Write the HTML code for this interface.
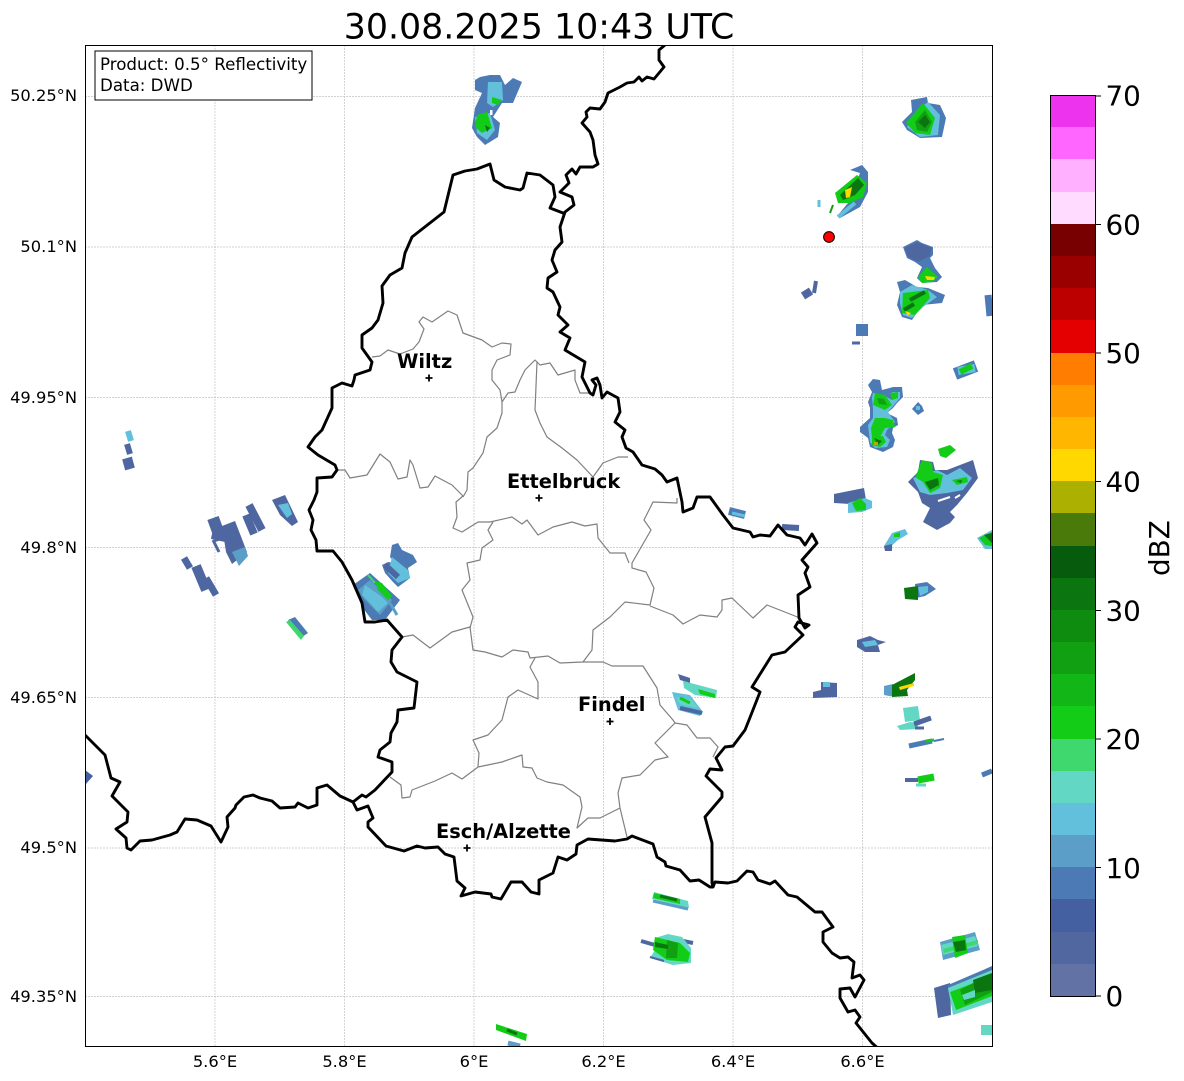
<!DOCTYPE html>
<html><head><meta charset="utf-8"><title>Radar</title>
<style>
html,body{margin:0;padding:0;background:#fff;}
svg{display:block;}
text{font-family:"DejaVu Sans","Liberation Sans",sans-serif;fill:#000;}
.t{font-size:16.3px;}
.lg{font-size:16.67px;}
.c{font-size:27.8px;}
.l{font-size:19.4px;font-weight:bold;}
.g{stroke:#c2c2c2;stroke-width:.7;stroke-dasharray:2 1;fill:none;}
.k{fill:none;stroke:#000;stroke-width:2.9;stroke-linejoin:round;stroke-linecap:round;}
.y{fill:none;stroke:#808080;stroke-width:1.2;stroke-linejoin:round;}
#r path{fill:none;stroke-linecap:butt;}
.a{stroke:#4f67a0}.b{stroke:#4c7ab5}.d{stroke:#5b9ec8}.e{stroke:#62c0dc}.f{stroke:#62d8c4}.h{stroke:#3fd86f}.i{stroke:#12cc18}.j{stroke:#10a012}.m{stroke:#0b7510}.o{stroke:#ffd800}
.A{fill:#4f67a0}.B{fill:#4c7ab5}.D{fill:#5b9ec8}.E{fill:#62c0dc}.F{fill:#62d8c4}.H{fill:#3fd86f}.I{fill:#12cc18}.J{fill:#10a012}.M{fill:#0b7510}.N{fill:#065c0c}.O{fill:#ffd800}.P{fill:#acb000}.Q{fill:#ff9a00}.W{fill:#fff}
.w2{stroke-width:2}.w3{stroke-width:3}.w4{stroke-width:4}.w5{stroke-width:5}.w6{stroke-width:6}.w7{stroke-width:7}.w8{stroke-width:8}.w10{stroke-width:10}.w12{stroke-width:12}
</style></head>
<body>
<svg width="1184" height="1081" viewBox="0 0 1184 1081" xmlns="http://www.w3.org/2000/svg">
<defs><clipPath id="ax"><rect x="85" y="45" width="907.500" height="1001"/></clipPath></defs>
<rect width="1184" height="1081" fill="#fff"/>
<text x="539" y="38.500" text-anchor="middle" style="font-size:34.8px">30.08.2025 10:43 UTC</text>

<!-- grid -->
<path class="g" d="M215 45V1046M344.500 45V1046M474 45V1046M603.500 45V1046M733 45V1046M862.500 45V1046M85 96.500H992M85 247H992M85 397.500H992M85 547.500H992M85 697.500H992M85 848H992M85 996.500H992"/>

<!-- radar echoes -->
<g id="r" clip-path="url(#ax)">
<!-- top centre -->
<polygon class="B" points="475,80 480,77 490,75 500,75 505,85 513,78 522,82 513,103 502,103 493,117 500,123 498,137 485,145 477,137 472,128 475,108 482,93 475,90"/>
<polygon class="E" points="488,82 502,82 503,100 493,107 487,103"/>
<polygon class="E" points="475,117 490,113 495,130 487,140 477,133"/>
<polygon class="I" points="492,97 502,100 498,105 492,103"/>
<polygon class="I" points="477,115 487,112 492,128 482,133 475,127"/>
<polygon class="M" points="485,125 490,128 487,132"/>
<rect class="W" x="490" y="110" width="2.500" height="5"/>
<!-- NE 1 -->
<polygon class="B" points="911,100 927,97 928,103 940,105 946,118 942,137 920,138 907,130 902,122 912,112"/>
<polygon class="E" points="917,110 928,102 940,115 938,135 920,137 907,127"/>
<polygon class="I" points="906,123 923,103 935,118 930,135 915,133"/>
<polygon class="J" points="915,122 925,110 932,122 927,132 917,130"/>
<polygon class="M" points="918,122 925,115 930,122 925,128"/>
<!-- station storm -->
<path class="e w3" d="M819 200L819 207"/>
<polygon class="B" points="850,170 862,165 868,172 868,192 860,207 840,218 838,215 848,203 860,173"/>
<polygon class="I" points="835,193 857,175 867,183 863,197 850,203 838,203"/>
<polygon class="M" points="840,195 858,178 864,185 855,195 843,200"/>
<polygon class="O" points="845,190 852,187 850,197 846,198"/>
<path class="j w2" d="M833 205L830 213"/>
<path class="e w4" d="M838 217L855 203"/>
<!-- right stack -->
<polygon class="B" points="903,247 917,240 922,243 933,247 933,255 930,258 935,268 942,277 937,282 922,283 917,278 922,267 915,262 907,258"/>
<polygon class="A" points="905,248 917,242 932,248 930,256 918,262 908,257"/>
<polygon class="I" points="918,277 927,267 938,277 932,282 922,283"/>
<polygon class="O" points="925,276 935,277 934,280 927,280"/>
<polygon class="B" points="897,282 905,280 917,287 928,288 945,295 942,303 922,305 912,320 902,317 897,305 900,292"/>
<polygon class="E" points="900,292 912,285 928,290 937,297 923,307 912,318 903,315 900,303"/>
<polygon class="I" points="903,293 928,290 930,298 915,315 902,313"/>
<path class="m w4" d="M910 300L925 292M904 310L914 304"/>
<polygon class="O" points="905,311 911,313 908,316"/>
<path class="a w8" d="M803 296L811 291"/><path class="a w4" d="M814 293L816 281"/>
<path class="b w12" d="M862 324L862 336"/><path class="a w3" d="M852 343L860 343"/>
<path class="b w7" d="M988 295L990 316"/>
<path class="b w12" d="M955 374L976 366"/><path class="e w8" d="M958 371L975 368"/><path class="i w6" d="M960 372L972 366"/>
<!-- mid stack -->
<polygon class="B" points="873,379 880,380 882,390 893,387 902,387 903,397 897,403 893,408 887,413 897,418 898,425 893,428 892,433 895,440 893,447 883,452 870,447 868,438 860,432 860,427 870,418 870,408 868,402 872,392 868,385"/>
<polygon class="E" points="873,393 883,395 892,400 892,392 900,392 900,398 888,412 895,422 887,430 885,435 890,440 887,447 875,448 870,442 868,425 873,418 873,408 872,398"/>
<polygon class="I" points="875,393 885,395 892,405 885,410 873,405"/>
<polygon class="I" points="890,393 898,392 898,398 892,400"/>
<polygon class="I" points="875,418 885,418 893,420 895,427 885,428 880,437 872,437 871,428"/>
<polygon class="I" points="872,437 883,436 886,442 880,447 872,445"/>
<polygon class="J" points="877,398 884,399 887,405 879,404"/>
<polygon class="M" points="874,438 882,441 878,445"/>
<rect class="P" x="874" y="442" width="4" height="3"/>
<polygon class="B" points="918,402 922,406 924,411 918,415 912,409"/><rect class="E" x="916" y="406" width="4" height="4"/>
<polygon class="I" points="938,449 950,445 956,450 946,458 940,456"/>
<!-- big cell -->
<polygon class="A" points="908,482 918,472 920,460 933,462 935,470 947,470 973,460 978,478 967,493 957,505 950,512 955,517 950,523 937,530 923,522 930,508 922,503 918,492"/>
<polygon class="E" points="913,478 937,470 947,475 960,468 972,478 963,490 947,493 930,495 920,492"/>
<polygon class="I" points="917,473 922,460 932,463 933,472 943,475 940,488 930,493 923,482 915,477"/>
<polygon class="I" points="952,480 967,477 968,482 957,485"/>
<polygon class="M" points="925,482 938,478 939,485 930,490"/>
<polygon class="M" points="956,481 962,480 961,483"/>
<path stroke="#fff" class="w2" d="M938 501L950 497M955 498L960 495"/>
<!-- 834-872 -->
<polygon class="A" points="834,494 864,488 866,500 850,504 834,503"/>
<polygon class="E" points="848,503 865,498 872,501 872,508 862,512 848,513"/>
<polygon class="I" points="852,503 860,498 866,504 866,510 856,511"/>
<path class="b w8" d="M729 511L745 515"/><path class="e w3" d="M732 513L745 516"/>
<path class="a w6" d="M782 527L799 528"/>
<polygon class="E" points="892,533 905,529 908,534 898,540 888,549 884,546"/>
<polygon class="I" points="894,534 900,532 900,537 894,537"/>
<polygon class="A" points="884,546 892,544 892,551 885,551"/>
<polygon class="E" points="977,538 992,530 992,549 985,549"/>
<polygon class="I" points="979,538 992,532 992,546 985,545"/>
<polygon class="M" points="984,535 992,533 992,543"/>
<!-- 904-936 -->
<polygon class="B" points="915,584 927,582 936,589 925,596 916,598"/>
<polygon class="E" points="918,587 928,586 928,592 920,596"/>
<polygon class="M" points="904,588 918,586 918,600 905,599"/>
<polygon class="A" points="857,640 870,636 878,640 886,642 878,645 880,652 865,652 857,647"/>
<polygon class="E" points="862,642 875,640 878,645 865,647"/>
<polygon class="A" points="821,682 837,683 837,697 813,698 813,692 821,690"/>
<rect class="E" x="823" y="682" width="7" height="5"/>
<polygon class="D" points="884,686 893,684 895,697 884,695"/>
<polygon class="M" points="892,685 915,673 915,680 907,690 908,696 892,697"/>
<polygon class="O" points="899,687 914,683 914,686 900,690"/>
<!-- 672-717 -->
<polygon class="A" points="678,674 690,678 690,683 680,680"/>
<polygon class="F" points="683,681 717,690 716,698 695,695 684,688"/>
<polygon class="I" points="698,689 715,694 715,698 700,694"/>
<polygon class="E" points="672,692 690,695 703,712 700,716 678,710"/>
<polygon class="F" points="676,697 692,700 698,708 680,704"/>
<path class="i w3" d="M680 698L690 703"/>
<path class="a w4" d="M680 708L702 713"/>
<polygon class="F" points="903,708 918,706 920,720 905,722"/>
<polygon class="F" points="897,726 910,722 918,723 918,729 900,730"/>
<path class="a w5" d="M914 724L931 718"/><path class="a w3" d="M915 728L924 728"/>
<path class="b w5" d="M909 746L932 741"/><path class="i w3" d="M926 741L934 740"/><path class="b w2" d="M934 741L944 739"/>
<path class="a w4" d="M905 780L918 780"/><path class="i w7" d="M918 780L934 777"/><path class="f w3" d="M916 785L926 785"/>
<path class="b w5" d="M982 775L992 771"/>
<!-- south -->
<polygon class="F" points="654,892 688,901 689,908 652,899"/>
<polygon class="I" points="654,893 680,899 680,904 653,898"/>
<path class="m w3" d="M660 896L677 900"/><path class="d w3" d="M653 901L688 909"/>
<path class="a w4" d="M641 941L655 945M678 940L693 943"/>
<polygon class="F" points="655,938 668,934 682,937 691,948 691,963 673,965 650,958 655,950"/>
<polygon class="I" points="655,937 680,943 690,953 688,962 667,960 653,950"/>
<polygon class="J" points="667,940 678,943 677,958 666,958"/>
<polygon class="M" points="655,942 668,945 668,949 655,947"/>
<path class="a w2" d="M650 957L664 961"/>
<!-- SE -->
<polygon class="D" points="940,942 975,932 980,950 943,960"/>
<polygon class="F" points="941,945 975,936 978,946 943,955"/>
<polygon class="H" points="943,949 978,940 978,944 944,953"/>
<polygon class="I" points="952,937 965,935 968,953 955,958"/>
<polygon class="M" points="953,942 965,940 966,950 956,952"/>
<polygon class="A" points="934,988 950,983 951,1015 938,1018"/>
<polygon class="B" points="948,985 983,970 992,966 992,982 948,992"/>
<polygon class="F" points="948,988 992,970 992,1002 953,1015"/>
<polygon class="I" points="950,992 992,976 992,996 956,1010"/>
<polygon class="J" points="960,990 975,982 992,978 992,992 965,1005"/>
<polygon class="M" points="973,980 992,973 992,990 975,993"/>
<polygon class="F" points="962,995 975,990 975,997 964,1000"/>
<path class="f w10" d="M981 1030H992"/>
<polygon class="I" points="496,1024 527,1034 526,1041 496,1030"/>
<path class="m w3" d="M507 1030L517 1034"/><path class="d w5" d="M508 1043L520 1046"/>
<!-- west -->
<path class="e w6" d="M128 431L131 441"/><path class="a w6" d="M127 444L130 454"/><path class="a w10" d="M127 458L130 469"/>
<path class="a w12" d="M213 518L221 540"/><path class="a w10" d="M212 534L230 538"/><path class="a w3" d="M213 540L219 552"/>
<polygon class="A" points="222,526 235,521 247,552 232,564 226,552"/>
<polygon class="D" points="232,552 245,547 248,556 239,566"/>
<path class="a w8" d="M249 505L262 530"/><path class="a w8" d="M246 515L254 534"/>
<polygon class="A" points="272,500 285,495 298,522 292,526 280,515"/>
<polygon class="E" points="278,505 288,503 292,514 287,518"/>
<path class="a w7" d="M184 558L190 568"/><path class="a w10" d="M196 566L206 590"/><path class="a w7" d="M206 578L216 595"/>
<polygon class="B" points="288,620 295,617 308,633 302,637"/>
<polygon class="H" points="286,622 290,620 304,636 301,640"/>
<!-- 352-400 -->
<polygon class="B" points="353,585 370,573 400,600 385,620 372,620 362,607 360,600"/>
<polygon class="D" points="358,590 370,580 392,600 380,615 365,600"/>
<polygon class="E" points="365,585 382,597 388,603 378,612 370,603 362,595"/>
<polygon class="I" points="375,581 382,583 392,596 388,600 378,590"/>
<path class="h w2" d="M368 575L375 583"/><path class="d w3" d="M390 603L397 615"/>
<polygon class="B" points="392,545 398,543 402,550 413,555 417,562 408,568 410,578 398,587 393,582 385,573 382,565 388,562 395,563 390,557"/>
<polygon class="E" points="392,557 408,570 410,578 398,583 388,573"/>
<path class="a w6" d="M385 565L398 577"/>
<polygon fill="#4460a0" points="85,770 93,776 85,785"/>
</g>

<!-- cantons -->
<g class="y" clip-path="url(#ax)">
<path d="M372 357L380 356L388 350L400 354L413 349L419 342L424 329L419 322L423 317L432 322L448 311L457 315L463 333L482 340L492 347L502 343L511 344L510 355L497 360L492 370L492 380L500 390L502 402L502 413L497 428L487 437L483 453L473 468L468 472L467 490L463 497"/>
<path d="M502 402L508 393L515 392L520 380L525 370L535 360L540 365L550 363L558 375L575 370L575 380L580 393L590 393"/>
<path d="M537 362L535 410L540 423L547 437L562 448L577 460L593 477L603 463L618 457L628 457"/>
<path d="M337 470L345 470L350 478L367 475L380 454L390 462L398 479L407 477L410 460L413 465L420 488L428 487L435 476L452 485L463 496L456 502L457 517L453 528L462 532L478 522L490 522L512 517L522 524L527 520L538 535L553 527L572 522L585 526L597 524L598 538L610 553L625 553L629 563"/>
<path d="M677 498L677 503L653 502L644 520L651 530L632 563L632 568L646 572L654 588L650 605L625 602L610 617L593 630L592 650L583 662L560 663L548 656L530 658L528 652L513 650L502 657L485 652L473 650L470 627L452 632L430 648L413 635L402 637"/>
<path d="M650 606L673 615L683 624L700 615L717 617L722 610L722 600L732 598L753 618L767 605L800 618"/>
<path d="M583 662L603 662L612 666L643 666L657 688L660 705L673 720L675 723L655 743L668 757L655 760L640 775L622 778L618 793L620 808L600 818L588 818L577 828L582 807L580 797L563 785L547 782L537 778L532 768L523 767L522 755L502 762L478 767L462 779L452 773L435 781L412 790L410 797L402 798L401 785L390 777"/>
<path d="M675 723L687 725L697 738L710 738L718 747L713 757"/>
<path d="M620 808L627 837"/>
<path d="M478 767L479 753L473 740L488 735L502 720L508 697L518 690L538 699L538 682L530 667L535 658"/>
<path d="M470 628L473 617L462 590L470 580L467 563L480 560L482 548L493 540L488 530L493 522"/>
</g>

<!-- borders -->
<g class="k" clip-path="url(#ax)">
<path d="M665 45L659 50L659 60L664 67L659 73L654 79L647 77L642 81L639 77L634 82L627 83L620 87L614 90L608 93L605 102L600 109L590 108L586 112L587 117L582 123L590 132L593 140L595 155L598 164L593 167L580 167L576 174L572 169L566 175L569 183L560 192L572 197L574 205L565 212L560 227L562 242L555 250L552 260L557 272L548 278L547 288L553 292L560 307L558 315L568 325L560 332L570 338L565 350L585 362L582 377L590 393L593 395L596 385L592 380L597 378L600 385L602 398L607 392L618 398L620 412L615 422L625 430L622 437L626 448L633 452L642 465L655 469L662 475L667 482L677 478L682 502L683 512L693 508L697 497L710 497L723 515L733 528L750 532L753 537L760 535L770 536L778 525L787 535L800 538L805 545L812 534L817 543L802 560L808 567L805 573L810 587L798 595L799 618L805 628L809 625L798 622L795 627L803 635L785 652L772 655L752 687L760 692L749 720L745 730L733 746L725 747L716 758L722 770L710 769L706 776L722 792L722 797L705 817L712 843L712 883L713 887"/>
<path d="M563 213L550 208L555 197L553 185L540 175L527 173L523 188L520 190L505 187L494 180L490 164L477 169L465 171L453 175L444 212L412 237L405 253L402 268L390 275L382 286L383 303L378 320L372 328L362 335L362 348L372 362L370 370L355 375L354 380L352 386L342 383L332 388L332 408L322 430L315 437L308 447L318 455L335 465L337 470L332 477L317 478L317 492L314 500L309 510L313 520L311 530L316 540L317 551L333 551L342 562L352 580L362 603L365 622L375 622L387 620L402 637L392 650L391 662L397 672L417 682L414 708L398 710L397 722L391 733L390 742L380 750L378 757L392 762L392 772L375 790L366 797L362 795L353 802L340 796L327 785L317 788L317 805L308 808L298 803L295 807L280 808L272 801L260 798L253 795L244 797L236 805L235 808L227 817L228 827L221 842L211 826L197 820L185 819L177 832L170 835L152 840L140 841L131 850L127 848L126 838L116 829L127 822L128 812L112 796L120 782L111 778L105 755L85 735"/>
<path d="M353 802L357 810L368 806L373 818L368 822L368 827L386 846L404 851L417 846L425 848L438 847L445 854L454 857L457 881L465 888L461 896L475 892L491 894L492 897L501 899L511 882L522 882L531 892L539 894L539 880L553 873L558 857L567 860L576 854L577 845L588 839L615 841L627 839L632 836L653 844L657 857L665 862L666 866L680 870L690 881L699 880L710 887L713 887L715 882L728 883L737 881L747 871L753 872L758 880L770 884L775 881L788 895L797 897L815 912L822 912L833 927L823 932L823 942L832 953L840 958L848 957L854 962L852 978L860 975L864 980L855 997L850 988L840 989L840 998L848 1012L855 1010L860 1017L856 1023L872 1043L880 1050"/>
</g>

<!-- cities -->
<g stroke="#000" stroke-width="1.800" fill="none"><path d="M425.500 378H432.500M429 374.500V381.500M535.500 498H542.500M539 494.500V501.500M606.500 721.500H613.500M610 718V725M463.500 848H470.500M467 844.500V851.500"/></g>
<text class="l" x="397" y="368">Wiltz</text>
<text class="l" x="507" y="488">Ettelbruck</text>
<text class="l" x="578" y="711">Findel</text>
<text class="l" x="436" y="838">Esch/Alzette</text>

<circle cx="829" cy="237" r="5.400" fill="#f00" stroke="#000" stroke-width="1"/>

<!-- axes -->
<rect x="85.500" y="45.500" width="907" height="1001" fill="none" stroke="#000" stroke-width="1"/>

<!-- legend -->
<rect x="95" y="51" width="217" height="49" fill="#fff" stroke="#000" stroke-width="1"/>
<text class="lg" x="100" y="70">Product: 0.5° Reflectivity</text>
<text class="lg" x="100" y="91">Data: DWD</text>

<!-- tick labels -->
<g class="t" text-anchor="end">
<text x="77" y="101">50.25°N</text>
<text x="77" y="252">50.1°N</text>
<text x="77" y="403">49.95°N</text>
<text x="77" y="553">49.8°N</text>
<text x="77" y="703">49.65°N</text>
<text x="77" y="853">49.5°N</text>
<text x="77" y="1002">49.35°N</text>
</g>
<g class="t" text-anchor="middle">
<text x="215" y="1067">5.6°E</text>
<text x="344.500" y="1067">5.8°E</text>
<text x="474" y="1067">6°E</text>
<text x="603.500" y="1067">6.2°E</text>
<text x="733" y="1067">6.4°E</text>
<text x="862.500" y="1067">6.6°E</text>
</g>

<!-- colorbar -->
<g>
<rect x="1051" y="95.500" width="44.500" height="32.500" fill="#ee33ee"/>
<rect x="1051" y="127" width="44.500" height="33" fill="#ff66ff"/>
<rect x="1051" y="159" width="44.500" height="33.500" fill="#ffb0ff"/>
<rect x="1051" y="192" width="44.500" height="32.500" fill="#ffdcff"/>
<rect x="1051" y="224" width="44.500" height="32.500" fill="#780000"/>
<rect x="1051" y="256" width="44.500" height="32.500" fill="#9a0000"/>
<rect x="1051" y="288" width="44.500" height="32.500" fill="#bc0000"/>
<rect x="1051" y="320" width="44.500" height="33.500" fill="#e40000"/>
<rect x="1051" y="353" width="44.500" height="32.500" fill="#ff7d00"/>
<rect x="1051" y="385" width="44.500" height="32.500" fill="#ff9a00"/>
<rect x="1051" y="417" width="44.500" height="32.500" fill="#ffb600"/>
<rect x="1051" y="449" width="44.500" height="32.500" fill="#ffd800"/>
<rect x="1051" y="481" width="44.500" height="32.500" fill="#acb000"/>
<rect x="1051" y="513" width="44.500" height="33.500" fill="#4a7a0a"/>
<rect x="1051" y="546" width="44.500" height="32.500" fill="#065c0c"/>
<rect x="1051" y="578" width="44.500" height="32.500" fill="#0b7510"/>
<rect x="1051" y="610" width="44.500" height="32.500" fill="#0e8c10"/>
<rect x="1051" y="642" width="44.500" height="32.500" fill="#10a012"/>
<rect x="1051" y="674" width="44.500" height="32.500" fill="#12b616"/>
<rect x="1051" y="706" width="44.500" height="33.500" fill="#12cc18"/>
<rect x="1051" y="739" width="44.500" height="32.500" fill="#3fd86f"/>
<rect x="1051" y="771" width="44.500" height="32.500" fill="#62d8c4"/>
<rect x="1051" y="803" width="44.500" height="32.500" fill="#62c0dc"/>
<rect x="1051" y="835" width="44.500" height="32.500" fill="#5b9ec8"/>
<rect x="1051" y="867" width="44.500" height="32.500" fill="#4c7ab5"/>
<rect x="1051" y="899" width="44.500" height="33.500" fill="#4460a0"/>
<rect x="1051" y="932" width="44.500" height="32.500" fill="#50689f"/>
<rect x="1051" y="964" width="44.500" height="32" fill="#6272a4"/>
</g>
<rect x="1050.500" y="95.500" width="45" height="901" fill="none" stroke="#000" stroke-width="1"/>
<path d="M1096 96H1101M1096 224.500H1101M1096 353H1101M1096 481.500H1101M1096 610.500H1101M1096 739H1101M1096 867.500H1101M1096 996H1101" stroke="#000" stroke-width="1"/>
<g class="c">
<text x="1105.500" y="105.500">70</text>
<text x="1105.500" y="234.500">60</text>
<text x="1105.500" y="363">50</text>
<text x="1105.500" y="491.500">40</text>
<text x="1105.500" y="620.500">30</text>
<text x="1105.500" y="749">20</text>
<text x="1105.500" y="878">10</text>
<text x="1105.500" y="1006">0</text>
</g>
<text class="c" transform="translate(1169,576) rotate(-90)">dBZ</text>
</svg>
</body></html>
